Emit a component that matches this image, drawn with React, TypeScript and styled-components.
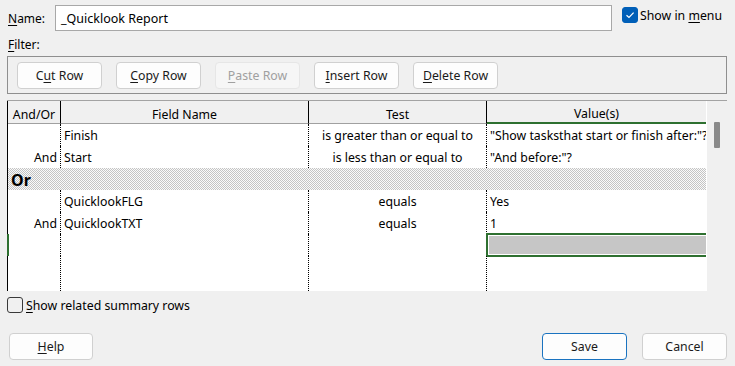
import React from "react"
import styled, { createGlobalStyle } from "styled-components"

const GlobalStyle = createGlobalStyle`
    html, body { margin: 0; padding: 0; background: #f0f0f0; }
    body {
        font-family: "Noto Sans", "Open Sans", sans-serif;
        font-size: 12px;
        color: #000;
    }
    u { text-underline-offset: 2px; }
`

const Dialog = styled.div`
    width: 735px;
    height: 366px;
    box-sizing: border-box;
    padding: 5px 8px 0 7px;
    display: flex;
    flex-direction: column;
    overflow: hidden;
`

const TopRow = styled.div`
    display: flex;
    align-items: center;
    height: 26px;
`

const Label = styled.span`
    width: 47px;
    padding-left: 1px;
`

const NameInput = styled.div`
    width: 557px;
    height: 26px;
    box-sizing: border-box;
    border: 1px solid #a8a8a8;
    background: #fff;
    display: flex;
    align-items: center;
    padding-left: 5px;
    font-size: 12.5px;
`

const MenuCheck = styled.label`
    display: flex;
    align-items: center;
    margin-left: 10px;
    margin-top: -6px;
    gap: 2px;
    font-size: 12.3px;
`

const CheckBox = styled.span<{ $checked?: boolean }>`
    width: 16px;
    height: 16px;
    box-sizing: border-box;
    border-radius: 3px;
    display: inline-flex;
    align-items: center;
    justify-content: center;
    background: ${p => (p.$checked ? "#005fb8" : "transparent")};
    border: 1px solid ${p => (p.$checked ? "#005fb8" : "#3a3a3a")};
`

const FilterLabel = styled.div`
    margin-top: 5px;
    height: 20px;
    padding-left: 1px;
`

const ToolBox = styled.div`
    height: 38px;
    box-sizing: border-box;
    border: 1px solid #8f8f8f;
    display: flex;
    align-items: center;
    gap: 14px;
    padding: 0 0 0 9px;
`

const Button = styled.div<{ $disabled?: boolean; $primary?: boolean }>`
    width: 85px;
    height: 27px;
    box-sizing: border-box;
    border-radius: 4px;
    border: 1px solid ${p => (p.$primary ? "#1a73c0" : p.$disabled ? "#e6e6e6" : "#d0d0d0")};
    background: ${p => (p.$disabled ? "#f6f6f6" : "#fdfdfd")};
    color: ${p => (p.$disabled ? "#a0a0a0" : "#1a1a1a")};
    display: flex;
    align-items: center;
    justify-content: center;
    font-size: 12.3px;
`

const Sheet = styled.div`
    margin-top: 6px;
    height: 190px;
    border-top: 1px solid #a3a3a3;
    display: grid;
    grid-template-columns: 699px 21px;
`

const Table = styled.div`
    display: grid;
    grid-template-columns: 53px 248px 178px 220px;
    grid-template-rows: 23px repeat(6, 22px) 1fr;
    background: #fff;
    border-left: 1px solid #000;
    box-sizing: border-box;
`

const Head = styled.div<{ $active?: boolean }>`
    background: #f0f0f0;
    border-right: 1px solid #000;
    border-bottom: ${p => (p.$active ? "2px solid #2e7030" : "1px solid #a0a0a0")};
    display: flex;
    align-items: flex-end;
    justify-content: center;
    margin-bottom: ${p => (p.$active ? "0" : "0")};
    line-height: 17px;
    font-size: 12.3px;
    &:last-child { border-right: none; }
`

const Cell = styled.div<{ $align?: string; $last?: boolean }>`
    display: flex;
    align-items: center;
    justify-content: ${p => p.$align || "flex-start"};
    padding: 1px 3px 0;
    border-right: ${p => (p.$last ? "none" : "1px dotted #000")};
    white-space: nowrap;
    overflow: hidden;
    font-size: 12.3px;
`

const OrRow = styled.div`
    grid-column: 1 / 5;
    display: flex;
    align-items: center;
    padding: 2px 0 0 3px;
    font-weight: bold;
    font-size: 16px;
    background-color: #fafafa;
    background-image: url("data:image/svg+xml,%3Csvg xmlns='http://www.w3.org/2000/svg' width='2' height='2'%3E%3Crect width='1' height='1' fill='%23c4c4c4'/%3E%3Crect x='1' y='1' width='1' height='1' fill='%23c4c4c4'/%3E%3C/svg%3E");
    background-size: 2px 2px;
`

const Selected = styled.div`
    margin: -1px 0 -1px -1px;
    border: 2px solid #2e7030;
    border-right: none;
    box-shadow: inset 0 0 0 1px #fff;
    background: #c6c6c6;
`

const RowMarker = styled.div`
    border-right: 1px dotted #000;
    box-shadow: inset 2px 0 0 #2e7030;
    margin-left: -1px;
`

const Scrollbar = styled.div`
    background: #f0f0f0;
    border-left: 1px solid #fff;
    display: flex;
    justify-content: center;
    padding-top: 21px;
`

const Thumb = styled.div`
    width: 6px;
    height: 26px;
    margin-left: -1px;
    border-radius: 1px;
    background: #8a8a8a;
`

const SummaryRow = styled.label`
    display: flex;
    align-items: center;
    gap: 3px;
    margin-top: 6px;
    height: 16px;
    font-size: 12.3px;
`

const Footer = styled.div`
    display: flex;
    align-items: center;
    margin-top: 20px;
    padding-left: 2px;
    gap: 15px;
    & > :first-child { margin-right: auto; width: 84px; }
`

const Check = () => (
    <svg width="10" height="10" viewBox="0 0 10 10">
        <path d="M1.5 5.2 L4 7.5 L8.6 2.6" fill="none" stroke="#fff" strokeWidth="1.2" />
    </svg>
)

const rows = [
    { op: "", field: "Finish", test: "is greater than or equal to", value: "\"Show tasksthat start or finish after:\"?" },
    { op: "And", field: "Start", test: "is less than or equal to", value: "\"And before:\"?" },
    null,
    { op: "", field: "QuicklookFLG", test: "equals", value: "Yes" },
    { op: "And", field: "QuicklookTXT", test: "equals", value: "1" },
]

export default function App() {
    return (
        <Dialog>
            <GlobalStyle />
            <TopRow>
                <Label><u>N</u>ame:</Label>
                <NameInput>_Quicklook Report</NameInput>
                <MenuCheck>
                    <CheckBox $checked><Check /></CheckBox>
                    <span>Show in <u>m</u>enu</span>
                </MenuCheck>
            </TopRow>
            <FilterLabel><u>F</u>ilter:</FilterLabel>
            <ToolBox>
                <Button>C<u>u</u>t Row</Button>
                <Button><u>C</u>opy Row</Button>
                <Button $disabled><u>P</u>aste Row</Button>
                <Button><u>I</u>nsert Row</Button>
                <Button><u>D</u>elete Row</Button>
            </ToolBox>
            <Sheet>
                <Table>
                    <Head>And/Or</Head>
                    <Head>Field Name</Head>
                    <Head>Test</Head>
                    <Head $active>Value(s)</Head>
                    {rows.map((r, i) =>
                        r === null ? (
                            <OrRow key={i}>Or</OrRow>
                        ) : (
                            <React.Fragment key={i}>
                                <Cell $align="flex-end">{r.op}</Cell>
                                <Cell>{r.field}</Cell>
                                <Cell $align="center">{r.test}</Cell>
                                <Cell $last>{r.value}</Cell>
                            </React.Fragment>
                        )
                    )}
                    <RowMarker />
                    <Cell />
                    <Cell />
                    <Selected />
                    <Cell />
                    <Cell />
                    <Cell />
                    <Cell $last />
                </Table>
                <Scrollbar>
                    <Thumb />
                </Scrollbar>
            </Sheet>
            <SummaryRow>
                <CheckBox />
                <span><u>S</u>how related summary rows</span>
            </SummaryRow>
            <Footer>
                <Button><u>H</u>elp</Button>
                <Button $primary>Save</Button>
                <Button>Cancel</Button>
            </Footer>
        </Dialog>
    )
}
